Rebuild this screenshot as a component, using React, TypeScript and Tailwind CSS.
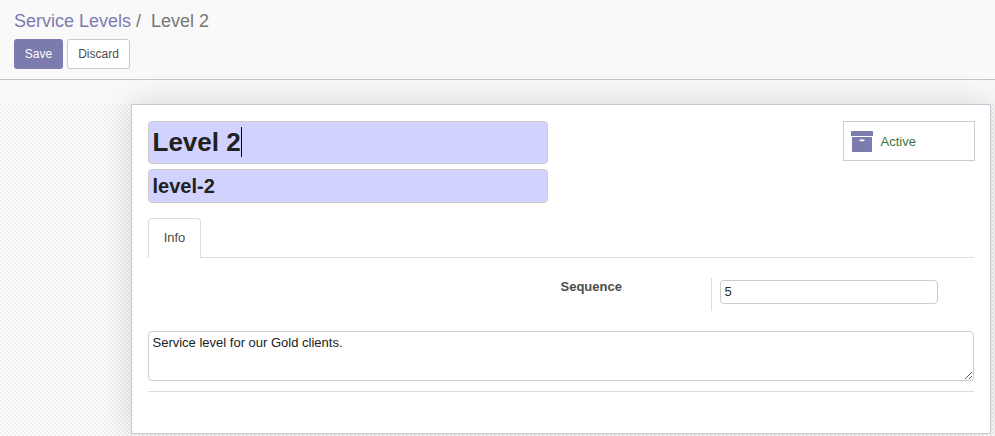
import React from "react";

const font = "font-['Liberation_Sans',Arial,sans-serif]";

function ArchiveIcon() {
  return (
    <svg width="22" height="21" viewBox="0 0 22 21" fill="#7c7bad">
      <path d="M.6 0h20.8q.6 0 .6.6v3.800q0 .6-.6.6H.6Q0 5 0 4.400V.6Q0 0 .6 0z" />
      <path
        fillRule="evenodd"
        d="M1.500 6h19q.5 0 .5.5v13.900q0 .6-.6.6H1.600q-.6 0-.6-.6V6.500Q1 6 1.500 6zM9.200 8.500q-.8 0-.8.85t.8.85h3.600q.8 0 .8-.85t-.8-.85z"
      />
    </svg>
  );
}

function ControlPanel() {
  return (
    <header className="h-20 border-b border-[#c5c5c8] bg-[#f9f9f9] pl-3.5 pt-2.5">
      <nav className="flex h-[22px] items-center whitespace-pre text-[18px] leading-[22px] text-[#777777]">
        <a className="text-[#7c7bad]">Service Levels</a>
        <span className="pl-[5px]">/</span>
        <span className="pl-[10px]">Level 2</span>
      </nav>
      <div className="mt-[7px] flex gap-1 text-[12px] leading-[18px]">
        <button className="h-[30px] w-[49px] rounded-[3px] bg-[#7c7bad] text-white">Save</button>
        <button className="h-[30px] w-[63px] rounded-[3px] border border-[#c9c9c9] bg-white text-[#4c4c4c]">
          Discard
        </button>
      </div>
    </header>
  );
}

function Sheet() {
  return (
    <section className="ml-[131px] h-[330px] w-[860px] border border-[#c8c8d3] bg-white px-4 pt-4 shadow-[0_0_30px_rgba(0,0,0,0.15)]">
      <div className="flex items-start justify-between">
        <div className="w-[400px] font-bold text-[#212121]">
          <div className="flex h-[43px] items-center rounded-[4px] border border-[#cccccc] bg-[#d2d2ff] pl-[3.5px] text-[26px]">
            <span>Level 2</span>
            <span className="mb-0.5 h-[30px] w-px bg-black" />
          </div>
          <div className="mt-[5px] flex h-[34px] items-center rounded-[4px] border border-[#cccccc] bg-[#d2d2ff] pl-[3.5px] text-[20px]">
            level-2
          </div>
        </div>
        <button className="-mr-px flex h-10 w-[132px] items-center border border-[#cccccc] pl-[7px] pt-px text-[13px] text-[#3c763d]">
          <ArchiveIcon />
          <span className="ml-[7.5px] pt-px">Active</span>
        </button>
      </div>
      <div className="mt-[15px] flex h-10 border-b border-[#dddddd]">
        <div className="h-10 w-[53px] rounded-t-[4px] border border-b-0 border-[#dddddd] bg-white pt-[9px] text-center text-[13px] leading-5 text-[#4c4c4c]">
          Info
        </div>
      </div>
      <div className="mt-5 flex h-[33px] pl-[412.5px] text-[13px]">
        <div className="w-[151.5px] border-r border-[#dddddd] font-bold leading-[18px] text-[#4c4c4c]">Sequence</div>
        <div className="ml-2 mt-0.5 h-6 w-[218px] rounded-[4px] border border-[#cccccc] pl-[3.5px] leading-[22px] text-[#2b2b2b]">
          5
        </div>
      </div>
      <textarea
        readOnly
        value="Service level for our Gold clients."
        className="mt-5 block h-[50px] w-[826px] rounded-[4px] border border-[#cccccc] bg-white px-[3.5px] py-[1px] text-[13px] leading-5 text-[#212121] outline-none"
      />
      <div className="mt-2.5 border-t border-[#dddddd]" />
    </section>
  );
}

export default function App() {
  return (
    <main className={`${font} h-[436px] w-[995px] overflow-hidden bg-[#f9f9f9]`}>
      <ControlPanel />
      <div className="mt-6 h-[332px] bg-[repeating-conic-gradient(#ffffff_0_25%,#eeeeee_0_50%)] bg-[length:4px_4px]">
        <Sheet />
      </div>
    </main>
  );
}
